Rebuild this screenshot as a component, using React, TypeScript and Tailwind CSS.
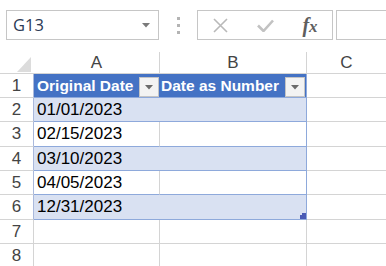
import React from 'react';

const FONT = { fontFamily: '"Liberation Sans", Arial, sans-serif' };

const rows = [
  { n: 1, h: 24, a: 'Original Date', b: 'Date as Number', kind: 'head' },
  { n: 2, h: 24, a: '01/01/2023', kind: 'band' },
  { n: 3, h: 25, a: '02/15/2023', kind: 'plain' },
  { n: 4, h: 24, a: '03/10/2023', kind: 'band' },
  { n: 5, h: 24, a: '04/05/2023', kind: 'plain' },
  { n: 6, h: 25, a: '12/31/2023', kind: 'band' },
  { n: 7, h: 24, a: '', kind: 'empty' },
  { n: 8, h: 24, a: '', kind: 'empty' },
];

const FilterButton = () => (
  <div className="absolute right-[1px] top-[3px] w-[20px] h-[20px] bg-[#f3f3f3] border border-[#c4c4c4] flex items-center justify-center">
    <svg width="8" height="5" viewBox="0 0 8 5">
      <path d="M0 0 L8 0 L4 4.5 Z" fill="#6a6a6a" />
    </svg>
  </div>
);

const Row = ({ r }: { r: (typeof rows)[number] }) => {
  const inTable = r.kind !== 'empty';
  const bg = r.kind === 'head' ? 'bg-[#4472C4]' : r.kind === 'band' ? 'bg-[#D9E1F2]' : 'bg-white';
  const bottom = inTable ? 'border-[#8EA9DB]' : 'border-[#d4d4d4]';
  return (
    <div className="flex" style={{ height: r.h }}>
      <div
        className={`w-[34px] shrink-0 border-r border-b border-[#d4d4d4] flex items-center justify-center text-[17px] text-[#444] ${
          inTable ? 'border-r-[#aab9dc]' : ''
        }`}
      >
        {r.n}
      </div>
      <div className={`w-[126px] shrink-0 border-b ${bottom} ${bg} relative flex items-center pl-[3px] ${inTable ? '' : 'border-r border-r-[#d4d4d4]'}`}>
        {r.kind === 'head' ? (
          <>
            <span className="text-white font-bold text-[15.5px]">{r.a}</span>
            <FilterButton />
          </>
        ) : (
          <span className="text-black text-[17px]">{r.a}</span>
        )}
      </div>
      <div
        className={`w-[147px] shrink-0 border-b ${bottom} ${bg} relative flex items-center ${
          inTable ? 'border-r border-r-[#8EA9DB]' : 'border-r border-r-[#d4d4d4]'
        } ${r.kind === 'plain' ? 'border-l border-l-[#d4d4d4]' : ''}`}
        style={r.kind === 'plain' ? { marginLeft: -1, width: 148 } : undefined}
      >
        {r.kind === 'head' && (
          <>
            <span className="text-white font-bold text-[15.5px] pl-[1px]">{r.b}</span>
            <FilterButton />
          </>
        )}
        {r.n === 6 && (
          <svg className="absolute right-0 bottom-0" width="6" height="6" viewBox="0 0 6 6">
            <path d="M2 0 H6 V6 H0 V2 H2 Z" fill="#4a5bb5" />
          </svg>
        )}
      </div>
      <div className="flex-1 border-b border-[#d4d4d4] bg-white" />
    </div>
  );
};

export default function App() {
  return (
    <div className="w-[386px] h-[266px] bg-white overflow-hidden" style={FONT}>
      {/* formula bar */}
      <div className="flex items-start pt-[10px] h-[50px]">
        <div className="ml-[6px] w-[153px] h-[30px] border border-[#c6c6c6] flex items-center justify-between pl-[6px] pr-[8px]">
          <span className="text-[16.5px] text-[#2b3a55]" style={{ fontFamily: '"Open Sans", sans-serif' }}>G13</span>
          <svg width="8" height="5" viewBox="0 0 8 5">
            <path d="M0 0 L8 0 L4 4.5 Z" fill="#7a7a7a" />
          </svg>
        </div>
        <div className="w-[38px] h-[30px] flex flex-col items-center justify-center gap-[4px]">
          <div className="w-[3px] h-[3px] bg-[#b4b4b4]" />
          <div className="w-[3px] h-[3px] bg-[#b4b4b4]" />
          <div className="w-[3px] h-[3px] bg-[#b4b4b4]" />
        </div>
        <div className="w-[136px] h-[30px] border border-[#c6c6c6] flex items-center">
          <div className="w-[44px] flex justify-center">
            <svg width="15" height="15" viewBox="0 0 15 15">
              <path d="M1 1 L14 14 M14 1 L1 14" stroke="#b9b9b9" strokeWidth="1.6" />
            </svg>
          </div>
          <div className="w-[46px] flex justify-center">
            <svg width="17" height="13" viewBox="0 0 17 13">
              <path d="M1 6.5 L6.5 12 L16 1.5" stroke="#c2c2c2" strokeWidth="2.6" fill="none" />
            </svg>
          </div>
          <div className="flex-1 flex justify-center items-center">
            <span className="italic font-bold text-[20px] leading-none text-[#5e5e5e]" style={{ fontFamily: '"Liberation Serif", serif' }}>
              f<span className="text-[17px]">x</span>
            </span>
          </div>
        </div>
        <div className="ml-[3px] flex-1 h-[30px] border border-r-0 border-[#c6c6c6]" />
      </div>

      {/* column headers */}
      <div className="flex h-[24px] border-b border-[#d4d4d4]">
        <div className="w-[34px] shrink-0 relative">
          <svg className="absolute left-[17px] top-[7px]" width="14" height="15" viewBox="0 0 14 15">
            <path d="M14 0 V15 H0 Z" fill="#dcdcdc" />
          </svg>
        </div>
        <div className="w-[126px] shrink-0 border-r border-[#d4d4d4] flex items-center justify-center text-[17px] text-[#444] mt-[2px]">A</div>
        <div className="w-[147px] shrink-0 border-r border-[#d4d4d4] flex items-center justify-center text-[17px] text-[#444] mt-[2px]">B</div>
        <div className="flex-1 flex items-center justify-center text-[17px] text-[#444] mt-[2px]">C</div>
      </div>

      {rows.map(r => (
        <Row key={r.n} r={r} />
      ))}
    </div>
  );
}
